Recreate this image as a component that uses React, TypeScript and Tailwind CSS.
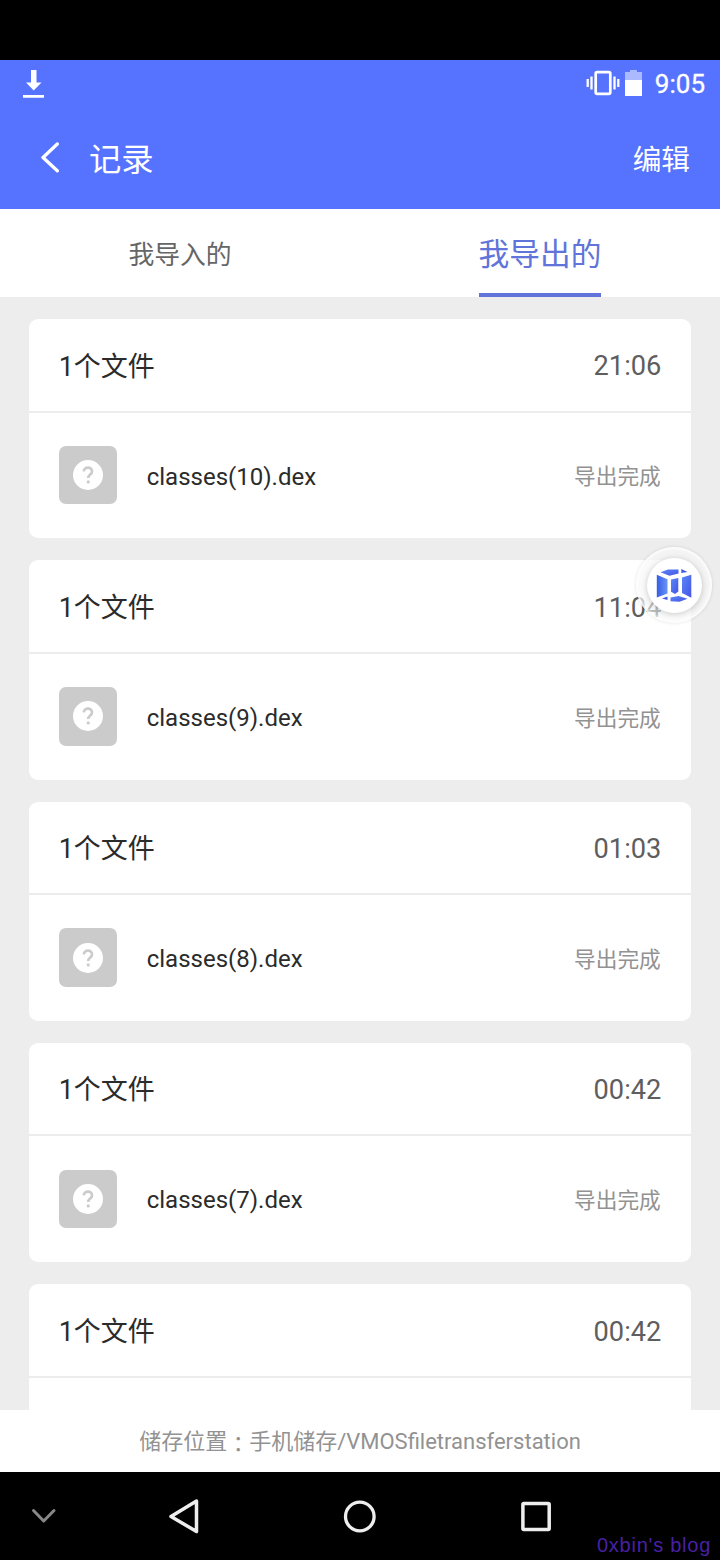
const records = [
  { name: 'classes(10).dex', time: '21:06' },
  { name: 'classes(9).dex', time: '11:04' },
  { name: 'classes(8).dex', time: '01:03' },
  { name: 'classes(7).dex', time: '00:42' },
  { name: 'classes(6).dex', time: '00:42' },
];

function StatusBar() {
  return (
    <div className="flex h-[50px] items-start justify-between bg-[#5673ff] pl-[23px] pr-[15px] text-white">
      <svg className="mt-[10px] h-7 w-[21px]" viewBox="0 0 21 28" fill="currentColor">
        <path d="M8 0h5.500v12.500h5L10.700 20.500 3 12.500h5zM0 25h21v2.700H0z" />
      </svg>
      <div className="flex items-start">
        <svg className="mt-[10px] h-7 w-[34px]" viewBox="0 0 34 28" fill="none" stroke="currentColor">
          <rect x="9.700" y="2.200" width="14.600" height="21.600" rx="1.500" strokeWidth="2.700" />
          <path d="M1.700 9v8M5.500 6.500v13M28.500 6.500v13M32.300 9v8" strokeWidth="2.300" />
        </svg>
        <svg className="ml-[5px] mt-[10px] h-7 w-[17px]" viewBox="0 0 17 28" fill="currentColor">
          <path d="M5 -.5h7v2.500h5V10H0V2h5z" opacity=".5" />
          <path d="M0 10h17v16H0z" />
        </svg>
        <span className="ml-[13px] mt-[6px] text-[26px] leading-[37px] [-webkit-text-stroke:0.3px_white]">9:05</span>
      </div>
    </div>
  );
}

function Header() {
  return (
    <header className="flex h-[99px] items-center bg-[#5673ff] pb-[3px] pl-[40px] pr-[30px] text-white">
      <svg className="mb-[2px] h-[32px] w-[19px]" viewBox="0 0 19 32" fill="none" stroke="currentColor" strokeWidth="3.300" strokeLinecap="round" strokeLinejoin="round">
        <path d="M17.300 3 3 16.500 17.300 29.800" />
      </svg>
      <h1 className="ml-[30px] pt-[3px] text-[32.300px] leading-[48px]">记录</h1>
      <button className="ml-auto pt-[4px] text-[28.700px] leading-[44px]">编辑</button>
    </header>
  );
}

function Tabs() {
  return (
    <nav className="grid h-[88px] grid-cols-2 bg-white">
      <div className="flex items-center justify-center pt-[4px] text-[25.800px] text-[#666]">我导入的</div>
      <div className="flex justify-center">
        <div className="flex h-full items-center border-b-4 border-[#6074d9] pt-[9px] text-[30.700px] text-[#6074d9]">我导出的</div>
      </div>
    </nav>
  );
}

function FileIcon() {
  return (
    <div className="flex h-[58.500px] w-[58.500px] items-center justify-center rounded-[7px] bg-[#cbcbcb]">
      <svg className="h-[30px] w-[30px]" viewBox="0 0 30 30">
        <circle cx="15" cy="15" r="15" fill="#fff" />
        <path d="M10.800 11.400C11 6.400 19 6.400 19 11.400c0 3-3.800 3.200-3.800 6.600" fill="none" stroke="#cbcbcb" strokeWidth="2.700" />
        <circle cx="15.200" cy="21.900" r="1.600" fill="#cbcbcb" />
      </svg>
    </div>
  );
}

function RecordCard({ name, time }: { name: string; time: string }) {
  return (
    <article className="h-[219.300px] shrink-0 rounded-[9px] bg-white">
      <div className="flex h-[93.500px] items-center justify-between border-b-2 border-[#ececec] px-[29.500px]">
        <span className="pt-[4px] text-[27px] text-[#2b2b2b]">1个文件</span>
        <span className="pt-[4px] text-[27.200px] text-[#5e5e5e]">{time}</span>
      </div>
      <div className="flex h-[125px] items-center px-[29.500px]">
        <FileIcon />
        <span className="ml-[29.500px] pt-[3px] text-[24px] text-[#2b2b2b]">{name}</span>
        <span className="ml-auto pr-[0.500px] pt-[5px] text-[21.700px] text-[#929292]">导出完成</span>
      </div>
    </article>
  );
}

function FloatingButton() {
  return (
    <div className="absolute left-[636px] top-[547px] flex h-[76px] w-[76px] items-center justify-center rounded-full bg-[#f7f7f7]/60 shadow-[0_0_3px_1px_rgba(0,0,0,0.07),inset_0_0_3px_2px_rgba(255,255,255,0.8)]">
      <div className="flex h-[55px] w-[55px] items-center justify-center rounded-full bg-white shadow-[0_1px_5px_1px_rgba(0,0,0,0.15)]">
        <svg className="h-[34px] w-[36px]" viewBox="0 0 36 34">
          <defs>
            <linearGradient id="cube" x1="0" y1="0" x2="1" y2="0">
              <stop offset="0" stopColor="#355ce5" />
              <stop offset="1" stopColor="#6995f8" />
            </linearGradient>
            <linearGradient id="face" x1="0" y1="0" x2="1" y2="1">
              <stop offset="0" stopColor="#5988f6" />
              <stop offset="1" stopColor="#4653e6" />
            </linearGradient>
          </defs>
          <path d="M.8 6.700 11.500 11.300V25.500L.8 29.500z" fill="url(#cube)" />
          <path d="M4.500 4.300 12 1.500h10.500v4l-9 2.300z" fill="url(#face)" />
          <path d="m25.300 1 6.200 3-6.200 1z" fill="#4258e7" />
          <path d="M15 11.500 22.300 10v13.500L19 26l-4-2.300z" fill="url(#face)" />
          <path d="M26 9.500 35.300 6.700v23L26 25z" fill="url(#face)" />
          <path d="m6 30.500 5.500-2V32z" fill="#4258e7" />
          <path d="M14.500 29.500 22.500 28l9 2.700-8 3-9-.5z" fill="url(#face)" />
        </svg>
      </div>
    </div>
  );
}

function NavigationBar() {
  return (
    <div className="relative flex h-[88px] items-center bg-black text-[#eee]">
      <svg className="ml-[31px] h-4 w-[26px] text-[#888]" viewBox="0 0 26 16" fill="none" stroke="currentColor" strokeWidth="3" strokeLinecap="round" strokeLinejoin="round">
        <path d="M2.500 2.500 12.700 13 23 2.500" />
      </svg>
      <svg className="ml-[111px] h-9 w-8" viewBox="0 0 32 36" fill="none" stroke="currentColor" strokeWidth="3.500" strokeLinejoin="round">
        <path d="M28.500 3 3 18.500 28.500 33.500z" />
      </svg>
      <svg className="ml-[143px] h-[34px] w-[34px]" viewBox="0 0 34 34" fill="none" stroke="currentColor" strokeWidth="3.300">
        <circle cx="16.800" cy="17.500" r="14.300" />
      </svg>
      <svg className="ml-[143px] h-[32px] w-[32px]" viewBox="0 0 32 32" fill="none" stroke="currentColor" strokeWidth="3.500">
        <rect x="2.900" y="3.400" width="26.300" height="26" rx="1" />
      </svg>
      <span className="absolute bottom-[2px] right-[9px] font-['Liberation_Sans',Arial,sans-serif] text-[20px] leading-[26px] tracking-[0.75px] text-[#4820a4]">0xbin's blog</span>
    </div>
  );
}

export default function App() {
  return (
    <div className="relative flex h-[1560px] w-[720px] flex-col overflow-hidden bg-black pt-[60px] font-[Roboto,'Noto_Sans_CJK_SC',sans-serif]">
      <StatusBar />
      <Header />
      <Tabs />
      <main className="flex h-[1113px] flex-col gap-[22px] overflow-hidden bg-[#ededed] px-[29.200px] pt-[22px]">
        {records.map((record) => (
          <RecordCard key={record.name} {...record} />
        ))}
      </main>
      <footer className="flex h-[62px] items-center justify-center bg-white text-[22px] text-[#929292]">
        <span className="pt-[1px]">储存位置</span>
        <span className="pt-[2px] font-['Noto_Sans_CJK_TC',sans-serif]">：</span>
        <span className="pt-[1px]">手机储存/VMOSfiletransferstation</span>
      </footer>
      <NavigationBar />
      <FloatingButton />
    </div>
  );
}
